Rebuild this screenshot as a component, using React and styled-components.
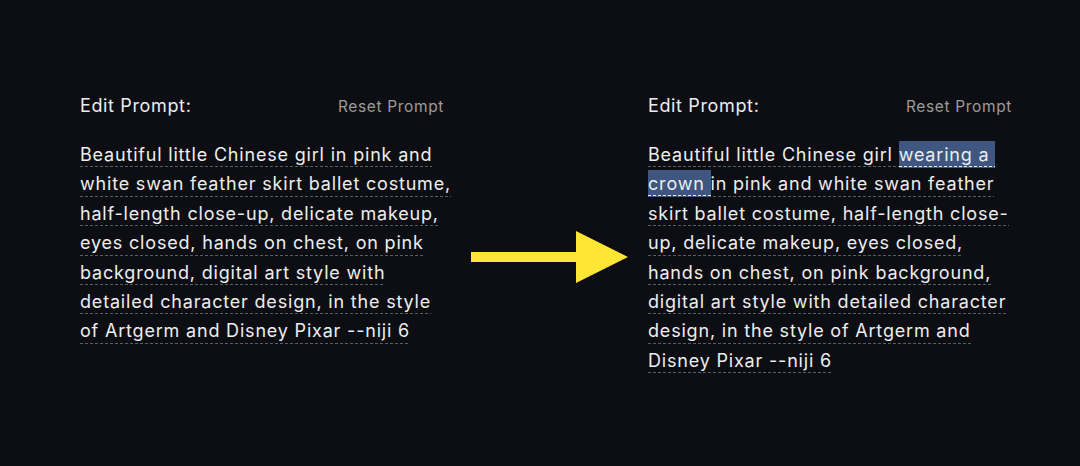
import React from "react"
import styled, { createGlobalStyle } from "styled-components"

const GlobalStyle = createGlobalStyle`
  body {
    margin: 0;
    background: #0d0e13;
    font-family: "Inter", "Liberation Sans", sans-serif;
  }
`

const before = [
    "Beautiful little Chinese girl in pink and",
    "white swan feather skirt ballet costume,",
    "half-length close-up, delicate makeup,",
    "eyes closed, hands on chest, on pink",
    "background, digital art style with",
    "detailed character design, in the style",
    "of Artgerm and Disney Pixar --niji 6",
]

const after = [
    ["Beautiful little Chinese girl ", { mark: "wearing a " }],
    [{ mark: "crown " }, "in pink and white swan feather"],
    ["skirt ballet costume, half-length close-"],
    ["up, delicate makeup, eyes closed,"],
    ["hands on chest, on pink background,"],
    ["digital art style with detailed character"],
    ["design, in the style of Artgerm and"],
    ["Disney Pixar --niji 6"],
]

function PromptPanel({ lines }) {
    return (
        <Panel>
            <Header>
                <Title>Edit Prompt:</Title>
                <Reset>Reset Prompt</Reset>
            </Header>
            <Body>
                {lines.map((line, index) => (
                    <Line key={index}>
                        {(Array.isArray(line) ? line : [line]).map((part, i) =>
                            typeof part === "string"
                                ? <React.Fragment key={i}>{part}</React.Fragment>
                                : <Mark key={i}>{part.mark}</Mark>
                        )}
                    </Line>
                ))}
            </Body>
        </Panel>
    )
}

export default function App() {
    return (
        <Page>
            <GlobalStyle />
            <Row>
                <PromptPanel lines={before} />
                <Arrow viewBox="0 0 157 52" width="157" height="52">
                    <rect x="0" y="21" width="107" height="10" fill="#fee433" />
                    <polygon points="105,0 157,26 105,52" fill="#fee433" />
                </Arrow>
                <PromptPanel lines={after} />
            </Row>
        </Page>
    )
}

const Page = styled.div`
    min-height: 466px;
    box-sizing: border-box;
    padding-top: 94px;
    background: #0d0e13;
`

const Row = styled.div`
    display: flex;
    align-items: flex-start;
    padding-left: 80px;
`

const Panel = styled.section`
    width: 363px;
    flex-shrink: 0;
    letter-spacing: 0.04em;
`

const Header = styled.header`
    display: flex;
    align-items: baseline;
    justify-content: space-between;
    height: 24px;
    line-height: 24px;
`

const Title = styled.h2`
    margin: 0;
    font-size: 18px;
    font-weight: 400;
    color: #ececec;
`

const Reset = styled.span`
    font-size: 15.5px;
    color: #9c9c9c;
    margin-right: -1px;
`

const Body = styled.div`
    margin-top: 22px;
    font-size: 18px;
    letter-spacing: 0.045em;
    color: #ededed;
`

const Line = styled.div`
    width: fit-content;
    height: 29.4px;
    line-height: 29.4px;
    white-space: pre;
    background-image: repeating-linear-gradient(to right, #5b5c62 0 3px, transparent 3px 5px);
    background-size: 100% 1px;
    background-repeat: no-repeat;
    background-position: 0 calc(100% - 2px);
`

const Mark = styled.span`
    padding: 3px 0;
    background-color: #3e5680;
    background-image: repeating-linear-gradient(to right, #f2f2f2 0 3px, transparent 3px 5px);
    background-size: 100% 1px;
    background-repeat: no-repeat;
    background-position: 0 calc(100% - 1px);
`

const Arrow = styled.svg`
    display: block;
    flex-shrink: 0;
    margin: 137px 20px 0 28px;
`
